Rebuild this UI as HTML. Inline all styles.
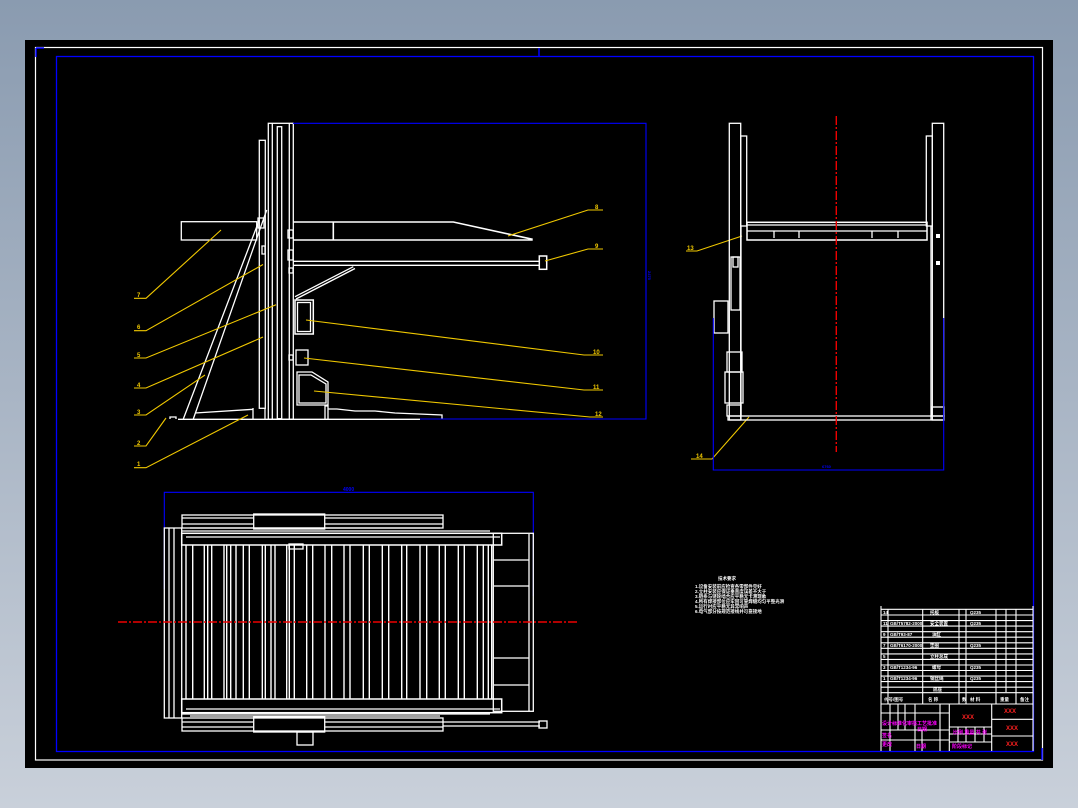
<!DOCTYPE html>
<html><head><meta charset="utf-8"><style>
html,body{margin:0;padding:0;width:1078px;height:808px;overflow:hidden;background:linear-gradient(#8a9bb0,#c9d0da);}
svg{position:absolute;left:0;top:0}
text{font-family:"Liberation Sans","Noto Sans CJK SC",sans-serif;font-weight:bold}
</style></head><body>
<svg width="1078" height="808" viewBox="0 0 1078 808">
<rect x="25" y="40" width="1028" height="728" fill="#000"/>
<rect x="35.5" y="47.5" width="1007" height="712.5" fill="none" stroke="#fff" stroke-width="1.2"/>
<rect x="56.5" y="56.5" width="977" height="695" fill="none" stroke="#0000ff" stroke-width="1.3"/>
<path d="M36 48h8M36 48v9M539 48v9M1042 748v12" stroke="#0000ff" stroke-width="1.5"/>

<!-- side view -->
<g fill="none" stroke="#fff" stroke-width="1.3">
<rect x="268.3" y="123.3" width="25" height="296"/>
<path d="M272.3 123.3V419M289.3 123.3V419"/>
<rect x="277.3" y="126.7" width="4.4" height="292"/>
<rect x="259.3" y="140.3" width="6" height="268"/>
<rect x="181.3" y="221.7" width="75.4" height="18.3"/>
<path d="M293 222H453.3L532.7 239.3M293 240H532.7M333.3 222V240" stroke-width="1.6"/>
<path d="M293 261.3H540M293 265.3H540"/>
<rect x="539.3" y="256" width="7.4" height="13.3" stroke-width="1.5"/>
<path d="M295 296.7L353.3 266.7M296 299L355 268.5"/>
<rect x="295" y="300" width="18.3" height="34" stroke-width="1.5"/>
<rect x="297.5" y="302.5" width="13" height="29"/>
<rect x="296" y="350" width="12" height="15"/>
<path d="M297 372H312L328 382V405H297Z"/>
<path d="M299 375H311L326 384V403H299Z"/>
<path d="M183.3 419L259.3 220M193.3 419L266.7 210"/>
<path d="M170 419V417H176V419M178 419.3H420M195 413L253 409.3M253 408V419M265 408V419"/>
<path d="M325 419V406H328V419M328 409H337L355 411H375L395 413L442 415V419"/>
<path d="M288 230h5v8h-5zM288 250h5v10h-5zM289 268h4v5h-4zM289 355h4v5h-4zM258 218h6v10h-6zM262 246h3v8h-3z"/>
</g>
<g fill="none" stroke="#0000ff" stroke-width="1.1">
<path d="M293 123.3H646V419H420"/>
</g>
<text x="648" y="271" font-size="4" fill="#0000ff" transform="rotate(90 648 271)">2475</text>
<g fill="none" stroke="#f0c800" stroke-width="1.1">
<path d="M134 298.3H146L221 230M134 330.7H146L263 264.5M134 358H146L276 304.7M134 388H146L263 337M134 415H146L205 375M134 446H146L166 418M134 467.7H146L248 415"/>
<path d="M508 236L588 210H603M545 261L588 249H603M306 320L584 355H603M304 358L584 390H603M314 391L590 417H603"/>
<path d="M686 251H697L742 236M691 459H712L749 417"/>
</g>
<g fill="#f0c800" font-size="6">
<text x="137" y="297">7</text><text x="137" y="329">6</text><text x="137" y="357">5</text><text x="137" y="387">4</text><text x="137" y="414">3</text><text x="137" y="445">2</text><text x="137" y="466">1</text>
<text x="595" y="209">8</text><text x="595" y="248">9</text><text x="593" y="354">10</text><text x="593" y="389">11</text><text x="595" y="416">12</text>
<text x="687" y="250">13</text><text x="696" y="458">14</text>
</g>

<!-- right view -->
<g fill="none" stroke="#fff" stroke-width="1.3">
<rect x="729.3" y="123.3" width="11.4" height="296.7"/>
<rect x="740.7" y="136" width="6" height="90"/>
<rect x="932.3" y="123.3" width="11.4" height="296.7"/>
<rect x="926.3" y="136" width="6" height="90"/>
<rect x="747" y="222.3" width="180" height="17.7" stroke-width="1.5"/>
<path d="M747 225H927M747 231H927M774 231V238M799 231V238M872 231V238M898 231V238"/>
<rect x="728" y="416" width="216" height="4"/>
<rect x="714" y="301" width="14" height="32"/>
<rect x="731" y="257" width="9" height="53"/>
<rect x="733" y="257" width="5" height="10"/>
<rect x="727" y="352" width="15" height="20"/>
<rect x="725" y="372" width="18" height="31"/>
<rect x="727" y="405" width="14" height="11"/>
<rect x="932" y="407" width="12" height="9"/>
<path d="M741 226V420M931 226V420"/>
</g>
<rect x="936" y="234" width="4" height="4" fill="#fff"/><rect x="936" y="261" width="4" height="4" fill="#fff"/>
<path d="M836.3 116V452" stroke="#e00" stroke-width="1.4" stroke-dasharray="9 2 2 2"/>
<path d="M713.3 318V470H943.7V318" fill="none" stroke="#0000ff" stroke-width="1.1"/>
<text x="822" y="468" font-size="4" fill="#0000ff">6760</text>

<!-- plan view -->
<path d="M164.3 589V492.3H533.3V596" fill="none" stroke="#0000ff" stroke-width="1.1"/>
<text x="343" y="491" font-size="5" fill="#0000ff">4000</text>
<g fill="none" stroke="#fff" stroke-width="1.3">
<rect x="182" y="515" width="261" height="13"/>
<rect x="253.7" y="514" width="71" height="15"/>
<path d="M182 518H253M182 524H253M325 518H443M325 524H443M190 528H440M182 531H490"/>
<rect x="164.3" y="528" width="17.4" height="190"/>
<path d="M169 528V718M174 528V718"/>
<rect x="181.7" y="533.3" width="320" height="11.7" stroke-width="1.5"/>
<rect x="181.7" y="699" width="320" height="13.7" stroke-width="1.5"/>
<path d="M186 537H500M186 709H500"/>
<rect x="493.3" y="533.3" width="40" height="178"/>
<path d="M494 560H529M494 586H529M494 658H529M494 685H529M529 534V711"/>
<rect x="182" y="718" width="261" height="13"/>
<rect x="253.7" y="717" width="71" height="15"/>
<path d="M182 722H253M182 727H253M325 722H443M325 727H443M190 716H440M182 714H490"/>
<rect x="297" y="732" width="16" height="13"/>
<path d="M443 722H540M443 726H540"/>
<rect x="539" y="721" width="8" height="7"/>
<rect x="289" y="544" width="14" height="5"/>
</g>
<g stroke="#fff" stroke-width="1.4">
<path d="M186 545V699M192.7 545V699M204.3 545V699M207.7 545V699M211.7 545V699M224 545V699M226.7 545V699M230.7 545V699M236 545V699M243.3 545V699M249.3 545V699M262.3 545V699M265.3 545V699M271 545V699M275 545V699M286.7 545V699M289.3 545V699M294.3 545V699M306.7 545V699M312.7 545V699M325 545V699M331.7 545V699M344 545V699M350 545V699M363.3 545V699M369.3 545V699M382.3 545V699M388.7 545V699M401.7 545V699M406.7 545V699M420 545V699M426.7 545V699M439.3 545V699M445.3 545V699M458.3 545V699M464.3 545V699M477.3 545V699M483.3 545V699M488.3 545V699M491.7 545V699"/>
</g>
<path d="M118 622H578" stroke="#e00" stroke-width="1.4" stroke-dasharray="9 2 2 2"/>

<!-- notes -->
<g fill="#fff" font-size="4.5">
<text x="718" y="580">技术要求</text>
<text x="695" y="588">1.设备安装前应检查各零部件完好</text>
<text x="695" y="593">2.立柱安装应保证垂直度误差不大于</text>
<text x="695" y="598">3.链条与链轮啮合应平稳无卡滞现象</text>
<text x="695" y="603">4.所有焊接部位应牢固可靠焊缝均匀平整光滑</text>
<text x="695" y="608">5.运行时应平稳无异常响声</text>
<text x="695" y="613">6.电气部分按规范接线并可靠接地</text>
</g>

<!-- title block -->
<g fill="none" stroke="#fff" stroke-width="1.1">
<path d="M881 609.3H1033M881 615H1033M881 620.6H1033M881 626.1H1033M881 631.7H1033M881 637.2H1033M881 642.8H1033M881 648.3H1033M881 653.9H1033M881 659.4H1033M881 665H1033M881 670.5H1033M881 676.1H1033M881 681.6H1033M881 687.2H1033M881 692.7H1033"/>
<path d="M881 606V751M888 609V704M922.7 609V704M959 609V704M966 609V704M996 609V704M1006 609V692M1016 609V704M1033 606V751"/>
<path d="M881 704H1033M949.3 704V751M991.7 704V751M991.7 719.3H1033M991.7 736H1033M949.3 727H991.7M949.3 734H991.7M949.3 742H991.7M881 713H949.3M881 730H949.3M881 740H949.3M890 704V751M898 704V730M905 704V730M915 704V751M922 730V751M940 704V751M958 727V742M966 727V742M975 727V742M984 727V742"/>
</g>
<g fill="#fff" font-size="4.5">
<text x="883" y="614">14</text><text x="883" y="625">11</text><text x="883" y="636">9</text><text x="883" y="647">7</text><text x="883" y="658">5</text><text x="883" y="669">3</text><text x="883" y="680">1</text>
<text x="890" y="625">GB/T5782-2000</text><text x="890" y="636">GB/T93-87</text><text x="890" y="647">GB/T6170-2000</text><text x="890" y="669">GB/T1234-96</text><text x="890" y="680">GB/T1234-96</text>
<text x="930" y="614">托板</text><text x="930" y="625">安全装置</text><text x="932" y="636">油缸</text><text x="930" y="647">垫圈</text><text x="930" y="658">立柱总成</text><text x="932" y="669">螺母</text><text x="930" y="680">钢丝绳</text><text x="933" y="691">底座</text>
<text x="970" y="614">Q235</text><text x="970" y="625">Q235</text><text x="970" y="647">Q235</text><text x="970" y="669">Q235</text><text x="970" y="680">Q235</text>
<text x="884" y="701">代号/图号</text><text x="928" y="701">名 称</text><text x="962" y="701">数</text><text x="970" y="701">材 料</text><text x="1000" y="701">重量</text><text x="1020" y="701">备注</text>
</g>
<g fill="#ff00ff" font-size="5">
<text x="882" y="725">设计标准化审核工艺批准</text><text x="917" y="731">日期</text>
<text x="882" y="737">签名</text><text x="882" y="746">更改</text><text x="916" y="748">日期</text>
<text x="953" y="734">比例 重量 共 张</text><text x="952" y="748">阶段标记</text>
</g>
<g fill="#ff2020" font-size="6">
<text x="962" y="719">XXX</text><text x="1004" y="713">XXX</text><text x="1006" y="730">XXX</text><text x="1006" y="746">XXX</text>
</g>
</svg>
</body></html>
